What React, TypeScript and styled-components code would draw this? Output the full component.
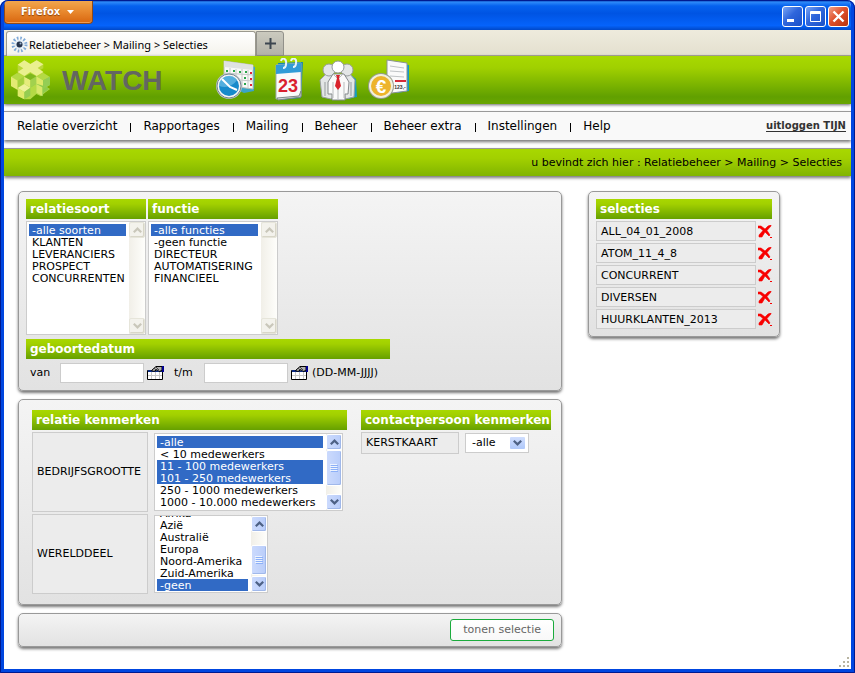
import React, { useLayoutEffect, useRef } from "react";
import styled, { createGlobalStyle, css } from "styled-components";

const lime = "linear-gradient(#a8d800, #a2d000 25%, #66a000)";
const verdana = '"DejaVu Sans", Verdana, sans-serif';

const GlobalStyle = createGlobalStyle`
  *, *::before, *::after { box-sizing: border-box; }
  body { margin: 0; background: #fff; color: #000; font: 11px/12px ${verdana}; }
  button, input, select { font: inherit; margin: 0; color: inherit; }
  button { cursor: pointer; }
  svg { display: block; }
`;

const Window = styled.div`
  display: flex;
  flex-direction: column;
  min-height: 100vh;
  border: solid #0046e0;
  border-width: 0 4px 4px;
  border-radius: 8px 8px 0 0;
  background: #fff;
  outline: 1px solid #001a90;
  outline-offset: -1px;
  overflow: hidden;
`;

const TitleBar = styled.header`
  display: flex;
  justify-content: space-between;
  align-items: flex-start;
  height: 30px;
  margin: 0 -4px;
  padding: 0 6px 0 4px;
  background: linear-gradient(#0a3fae, #2a86f8 8%, #0561ee 20%, #0054e3 45%, #0563fb 85%, #0048c8);
`;

const FirefoxButton = styled.button`
  display: flex;
  align-items: center;
  gap: 7px;
  height: 24px;
  padding: 0 18px 0 16px;
  border: 1px solid #8d4a1c;
  border-top: 0;
  border-radius: 0 0 4px 4px;
  background: linear-gradient(#f2a951, #ea8c31 45%, #d8660f);
  box-shadow: inset 0 -1px 0 #f09b50;
  color: #fff;
  font: bold 11px/14px "DejaVu Sans Condensed", "DejaVu Sans", sans-serif;
  text-shadow: 0 1px 1px #8a4108;
`;

const WindowControls = styled.div`
  display: flex;
  gap: 2px;
  padding-top: 6px;
`;

const ControlButton = styled.button<{ $close?: boolean }>`
  width: 21px;
  height: 21px;
  padding: 0;
  border: 1px solid #fff;
  border-radius: 3px;
  background: ${(p) =>
    p.$close
      ? "linear-gradient(135deg, #f0a088, #e0512c 45%, #b8320c)"
      : "linear-gradient(135deg, #7aa5f5, #2f66dc 45%, #1a50c8)"};
`;

const TabBar = styled.div`
  display: flex;
  align-items: flex-end;
  height: 26px;
  padding-left: 2px;
  border-bottom: 1px solid #aaa798;
  background: linear-gradient(#eeebdd, #e4e0cf);
`;

const Tab = styled.div`
  display: flex;
  align-items: center;
  gap: 1px;
  width: 250px;
  height: 25px;
  margin-bottom: -1px;
  padding: 1px 0 0 4px;
  border: 1px solid #9b998e;
  border-bottom: 0;
  border-radius: 3px 3px 0 0;
  background: linear-gradient(#fff, #f4f2eb);
  font: 11px/14px "Noto Sans", Tahoma, sans-serif;
`;

const NewTab = styled.button`
  display: grid;
  place-items: center;
  width: 28px;
  height: 25px;
  margin-bottom: -1px;
  padding: 0;
  border: 1px solid #92918a;
  border-radius: 0 3px 0 0;
  background: linear-gradient(#cbcabf, #b3b2a8);
`;

const Banner = styled.div`
  display: flex;
  align-items: center;
  height: 48px;
  padding-left: 6px;
  background: linear-gradient(#a8d900, #a0d000 25%, #61a000 85%, #68a500);
  box-shadow: 0 1px 3px #666;
`;

const Brand = styled.h1`
  flex: 0 0 153px;
  margin: 2px 0 0 12px;
  color: #636661;
  font: bold 28px/34px "Liberation Sans", Arial, sans-serif;
`;

const Shortcuts = styled.div`
  display: flex;
  gap: 9px;
`;

const Shortcut = styled.button`
  width: 42px;
  height: 44px;
  padding: 0;
  border: 0;
  background: none;
`;

const NavBar = styled.nav`
  display: flex;
  align-items: center;
  justify-content: space-between;
  height: 29px;
  margin-top: 7px;
  padding: 0 5px 0 13px;
  border-top: 1px solid #999;
  background: #f9f9f9;
  box-shadow: 0 2px 3px #777;
`;

const NavItems = styled.ul`
  display: flex;
  margin: 0;
  padding: 0;
  list-style: none;
  font-size: 12px;
  line-height: 16px;
`;

const NavItem = styled.li`
  display: flex;
  align-items: center;
  & + &::before {
    content: "";
    height: 9px;
    margin: 2px 12px 0 13px;
    border-left: 1px solid #000;
  }
`;

const NavLink = styled.a`
  color: #000;
  text-decoration: none;
`;

const Logout = styled.a`
  color: #333;
  font-size: 10px;
  font-weight: bold;
  text-underline-offset: 2px;
`;

const Crumbs = styled.div`
  height: 28px;
  margin-top: 8px;
  padding: 0 9px;
  border-top: 1px solid #999;
  background: linear-gradient(#a8d800, #a2d000 35%, #80b400);
  box-shadow: 0 2px 3px #777;
  line-height: 28px;
  text-align: right;
`;

const Content = styled.main`
  display: flex;
  flex-wrap: wrap;
  align-items: flex-start;
  gap: 26px;
  padding: 15px 14px 8px;
`;

const MainColumn = styled.form`
  flex: 0 1 544px;
  display: flex;
  flex-direction: column;
  gap: 8px;
`;

const Panel = styled.section<{ $roomy?: boolean }>`
  padding: ${(p) => (p.$roomy ? "10px 8px 10px 13px" : "7px")};
  border: 1px solid #999;
  border-radius: 5px;
  background: linear-gradient(#f4f4f4, #e2e2e2);
  box-shadow: 0 2px 3px #777;
`;

const SidePanel = styled(Panel)`
  flex: 0 0 192px;
`;

const ActionPanel = styled(Panel)`
  display: flex;
  justify-content: flex-end;
  padding: 5px 7px;
`;

const Heading = styled.h2`
  margin: 0;
  height: 20px;
  padding: 0 1px 0 4px;
  background: ${lime};
  color: #fff;
  font: bold 12px/20px ${verdana};
  white-space: nowrap;
`;

const ListPair = styled.div`
  display: grid;
  grid-template-columns: 120px 130px;
  gap: 2px;
`;

const Birthday = styled.div`
  max-width: 364px;
  margin-top: 4px;
`;

const DateRow = styled.div`
  display: flex;
  align-items: center;
  margin-top: 3px;
  padding-left: 4px;
  height: 21px;
`;

const DateLabel = styled.label`
  width: 30px;
`;

const DateInput = styled.input`
  width: 84px;
  height: 20px;
  padding: 2px 4px;
  border: 1px solid #ccc;
  background: #fff;
`;

const DateButton = styled.button`
  margin: 0 4px 0 3px;
  padding: 0;
  border: 0;
  background: none;
  & + label {
    margin-left: 6px;
  }
`;

const ListFrame = styled.div<{ $rows: number; $width: number }>`
  display: flex;
  width: ${(p) => p.$width}px;
  height: ${(p) => p.$rows * 12 + 6}px;
  border: 1px solid #ccc;
  background: #fff;
`;

const List = styled.select<{ $flush: boolean }>`
  flex: 1;
  min-width: 0;
  margin: ${(p) => (p.$flush ? "0 3px 0 2px" : "2px 3px 2px 2px")};
  padding: 0;
  border: 0;
  border-radius: 0;
  outline: 0;
  background: #fff;
  scrollbar-width: none;
  overflow-y: auto;
  option {
    height: 12px;
    min-height: 12px;
    padding: 0 3px;
    line-height: 12px;
  }
  option:checked {
    background: linear-gradient(#316ac5, #316ac5);
    -webkit-text-fill-color: #fff;
  }
`;

const Bar = styled.div`
  display: flex;
  flex-direction: column;
  flex: 0 0 16px;
  background: linear-gradient(90deg, #f1efe8, #fefefb);
`;

const blueFace = css`
  border: 1px solid #fff;
  border-radius: 2px;
  background: linear-gradient(90deg, #cbdafd, #b9cdfa);
  box-shadow: inset -1px -1px 0 #a0b8ea;
`;

const BarButton = styled.button`
  display: grid;
  place-items: center;
  flex: 0 0 16px;
  padding: 0;
  ${blueFace}
  color: #4d6185;
  &:disabled {
    border-color: #e6e5da;
    background: #f3f2ec;
    box-shadow: inset -1px -1px 0 #d8d6c8;
    color: #c9c7ba;
  }
`;

const Thumb = styled.div<{ $size: number; $end: boolean }>`
  display: grid;
  place-items: center;
  height: ${(p) => p.$size}px;
  margin: ${(p) => (p.$end ? "auto 0 1px" : "0 0 auto")};
  ${blueFace}
`;

const Filler = styled.div`
  flex: 1;
`;

const Traits = styled.div`
  display: grid;
  grid-template-columns: minmax(0, 315px) max-content;
  align-items: start;
  gap: 14px;
`;

const TraitRow = styled.div<{ $label: number }>`
  display: grid;
  grid-template-columns: ${(p) => p.$label}px auto;
  justify-content: start;
  align-items: center;
  gap: 6px;
  margin-top: 2px;
`;

const TraitLabel = styled.label<{ $tall?: boolean }>`
  display: flex;
  align-items: center;
  height: ${(p) => (p.$tall ? 80 : 22)}px;
  padding-left: 4px;
  border: 1px solid #ccc;
  background: #ececec;
`;

const Picker = styled.div`
  position: relative;
  width: 64px;
`;

const PickerSelect = styled.select`
  appearance: none;
  width: 100%;
  height: 20px;
  padding: 0 6px;
  border: 1px solid #ccc;
  border-radius: 0;
  background: #fff;
`;

const PickerArrow = styled.span`
  position: absolute;
  top: 4px;
  right: 4px;
  display: grid;
  place-items: center;
  width: 15px;
  height: 12px;
  border-radius: 1px;
  background: linear-gradient(#d0defe, #afc8fa);
  color: #4d6185;
  pointer-events: none;
`;

const Submit = styled.button`
  height: 22px;
  padding: 0 12px;
  border: 1px solid #1aab3c;
  border-radius: 3px;
  background: linear-gradient(#fff, #f8f8f8);
  color: #666;
  line-height: 20px;
`;

const Selections = styled.ul`
  margin: 0;
  padding: 0;
  list-style: none;
`;

const Selection = styled.li`
  display: flex;
  align-items: center;
  gap: 2px;
  margin-top: 2px;
`;

const SelectionName = styled.span`
  flex: 1;
  height: 20px;
  padding-left: 4px;
  border: 1px solid #ccc;
  background: #ececec;
  line-height: 19px;
`;

const DeleteButton = styled.button`
  padding: 0;
  border: 0;
  background: none;
`;

const Grip = styled.div`
  display: flex;
  justify-content: flex-end;
  margin-top: auto;
  padding: 0 1px 1px 0;
`;

function Chevron({ up }: { up?: boolean }) {
  return (
    <svg width="9" height="6" viewBox="0 0 9 6" fill="none" stroke="currentColor" strokeWidth="2.2">
      <path d={up ? "M.8 5.2 4.5 1.6 8.2 5.2" : "M.8.8 4.5 4.4 8.2.8"} />
    </svg>
  );
}

type ListBoxProps = {
  id: string;
  options: string[];
  selected: string[];
  rows: number;
  width: number;
  thumb?: number;
  atEnd?: boolean;
  label?: string;
};

function ListBox({ id, options, selected, rows, width, thumb = 0, atEnd = false, label }: ListBoxProps) {
  const list = useRef<HTMLSelectElement>(null);
  useLayoutEffect(() => {
    if (list.current) list.current.scrollTop = atEnd ? list.current.scrollHeight : 0;
  }, [atEnd]);
  const scroll = (rowsBy: number) => list.current?.scrollBy(0, rowsBy * 12);
  return (
    <ListFrame $rows={rows} $width={width}>
      <List id={id} ref={list} multiple size={rows} defaultValue={selected} aria-label={label} $flush={atEnd}>
        {options.map((o) => (
          <option key={o}>{o}</option>
        ))}
      </List>
      <Bar>
        <BarButton type="button" disabled={!thumb} aria-label="Omhoog" onClick={() => scroll(-1)}>
          <Chevron up />
        </BarButton>
        {thumb ? (
          <Thumb $size={thumb} $end={atEnd}>
            <svg width="8" height="8">
              <path d="M0 .5h7M0 2.5h7M0 4.5h7M0 6.5h7" stroke="#eef4fe" />
              <path d="M1 1.5h7M1 3.5h7M1 5.5h7M1 7.5h7" stroke="#8cb0f8" />
            </svg>
          </Thumb>
        ) : (
          <Filler />
        )}
        <BarButton type="button" disabled={!thumb} aria-label="Omlaag" onClick={() => scroll(1)}>
          <Chevron />
        </BarButton>
      </Bar>
    </ListFrame>
  );
}

function CalendarIcon() {
  return (
    <svg width="17" height="15" viewBox="0 0 17 15">
      <path d="M.5 5.5h15v9H.5z" fill="#fff" stroke="#000" />
      <path d="M1 5h14v2H1z" fill="#0a2a80" />
      <path d="M1 10.5h14M4.5 7v7M8.5 7v7M12.5 7v7" stroke="#c8c8c8" />
      <path d="M4.5 5.5 9 1.5h6v4l-3 1-2-2-3 2z" fill="#b0b0b0" stroke="#000" />
      <path d="m7 3 3 3M9 2l3 3" stroke="#444" />
      <path d="M15 1h2v6h-2z" fill="#000090" />
    </svg>
  );
}

function DeleteIcon() {
  return (
    <svg width="14" height="13" viewBox="0 0 14 13">
      <path d="M0 1h3l4 3 3-3 3-1v1L9 5.500l3 4.500-1 1-4-4-3 5-3 0V10l4-4.500-3-2.500H0z" fill="#f80000" stroke="#f80000" strokeWidth=".6" />
      <path d="M12 12h2v1h-2z" fill="#f80000" />
    </svg>
  );
}

function Favicon() {
  return (
    <svg width="17" height="17" viewBox="0 0 17 17">
      <circle cx="8.5" cy="8.5" r="6.5" fill="none" stroke="#80aad8" strokeWidth="3" strokeDasharray="1.6 1.8" />
      <circle cx="8.5" cy="8.5" r="4.5" fill="#dce9f5" />
      <circle cx="8.5" cy="8.5" r="3" fill="#25334b" />
      <circle cx="9.5" cy="7.5" r="1" fill="#9eb5cf" />
    </svg>
  );
}

function Logo() {
  return (
    <svg width="40" height="40" viewBox="12 12 120 120">
      <path d="m35 26 20-13 18 11 19-11 20 12v12l-8 4 8 7v18H35z" fill="#b9d838" />
      <path d="m15 62 18-11 22 12 18-10 18 10 22-12 19 12v24l-10 6 10 6-19 14-8 8-14-7-18 16-18 0-19-10V100L15 90z" fill="#b4da45" />
      <path d="m35 26 20-13 18 11 19-11 20 12-17 11 17 12-20 12-19-12-18 12-20-12 17-11z" fill="#eaf08f" />
      <path d="m15 62 20 12 0 28-20-12z" fill="#e3ea72" />
      <path d="m35 74 18-12v20l-18 18z" fill="#a5d03c" />
      <path d="m55 62 18 10v22l-18-10z" fill="#e6ec7c" />
      <path d="m73 72 18-11v22l-18 11z" fill="#a2d14e" />
      <path d="m55 62 18-10 18 9-18 11z" fill="#7fb81e" />
      <path d="m35 96 20-12 18 11-18 13z" fill="#eef29a" />
      <path d="m35 96 20 12v22l-20-10z" fill="#dfe96c" />
      <path d="m55 108 18-13v24l-18 11z" fill="#94cc52" />
      <path d="m91 61 21 12 20-11v24l-12 6 10 7-18 13-2 9-19-11V84l-18 11V94l18-11z" fill="#8fcb4c" />
      <path d="m91 61 20 12v16l-20-6z" fill="#dde968" />
      <path d="m91 84 18 10v26l-18-10z" fill="#d8e76a" />
      <path d="m112 73 20-11v24l-20 12z" fill="#93cd55" />
    </svg>
  );
}

function ScheduleIcon() {
  return (
    <svg width="42" height="44" viewBox="0 0 42 44">
      <path d="m12 5 28 4-1 24-10 2-17-8z" fill="#3aa4c8" />
      <path d="m9 3 29 4v24l-29-4z" fill="#f8f9f8" stroke="#b8bcb8" />
      <path d="m9 3 29 4v5L9 9z" fill="#dfe2e1" />
      <path d="m9 15 29 2M9 21l29 2M15 10v17M21 11v17M27 11v18M33 12v18" stroke="#c6c9c8" />
      <path d="M11 12h2v2h-2zm7 0h2v2h-2zm6 1h2v2h-2zm6 0h2v2h-2zm-1 6h2v2h-2zm0 6h2v2h-2z" fill="#2aa54b" />
      <path d="M35 14h2v2h-2zm0 6h2v2h-2zm0 6h2v2h-2z" fill="#df2437" />
      <circle cx="14" cy="28" r="13" fill="#b9c4cb" />
      <circle cx="14" cy="28" r="12" fill="#f5f6f7" stroke="#7b8790" />
      <circle cx="14" cy="28" r="10" fill="#178acb" />
      <path d="M4 28a10 10 0 0 1 18-6c-5 7-11 8-18 6" fill="#6cbde6" opacity=".7" />
      <path d="m7 21 8 8 7 3" fill="none" stroke="#fff" strokeWidth="2" />
    </svg>
  );
}

function DateIcon() {
  return (
    <svg width="42" height="44" viewBox="-2 0 42 44">
      <path d="m10 5 25-1-2 36-21 2z" fill="#1688ae" />
      <path d="m8 7 25-2v33L8 41z" fill="#fafafa" stroke="#a2aaad" />
      <path d="m8 7 25-2v9L8 16z" fill="#319bd7" />
      <path d="m9 40 22-2 2-5v6L10 42z" fill="#d6dadb" stroke="#808a8b" />
      <path d="M13 3c1-4 6-3 5 3 0 2-1 4-3 4M23 3c1-4 6-3 5 2 0 2-1 4-3 4" fill="none" stroke="#e7f3fa" strokeWidth="2" />
      <text x="20" y="34" textAnchor="middle" fill="#d9202e" fontFamily="Liberation Sans" fontWeight="bold" fontSize="18">23</text>
    </svg>
  );
}

function PeopleIcon() {
  return (
    <svg width="42" height="44" viewBox="0 0 42 44">
      <path d="m34 17 5 4 1 18-9 2z" fill="#179cc1" />
      <g fill="#e3e6e6" stroke="#989d9f">
        <path d="m3 22 6-6h8v23l-3 2-9-2zM26 16h7l5 6-1 17-9 2z" />
        <circle cx="12" cy="12" r="6" />
        <circle cx="30" cy="12" r="6" />
        <path d="M8 24v14M34 24v14" />
      </g>
      <path d="m11 24 5-8h11l5 8-1 12h-3v6H15v-6h-4z" fill="#fafafa" stroke="#858a8d" />
      <path d="M16 24v16M27 24v16" stroke="#b8bbbc" />
      <circle cx="21" cy="9" r="6" fill="#fff" stroke="#92989b" />
      <path d="m16 16 5 5 5-5M21 21v20" fill="none" stroke="#b8bbbc" />
      <path d="m19 17 4 0-1 3 2 8-3 4-3-4 2-8z" fill="#d9232c" />
    </svg>
  );
}

function InvoiceIcon() {
  return (
    <svg width="42" height="44" viewBox="0 0 42 44">
      <path d="m21 4 20 3v26l-12 2z" fill="#139ac4" />
      <path d="m19 2 20 3v28l-15 2-5-4z" fill="#fafafa" stroke="#8b9395" />
      <path d="m22 8 14 2M22 13l14 1M22 18l14 1" stroke="#bfc3c5" />
      <path d="M27 23h11" stroke="#d62a36" strokeWidth="2" />
      <text x="32" y="31" textAnchor="middle" fill="#333" fontFamily="Liberation Sans" fontWeight="bold" fontSize="5">123,-</text>
      <circle cx="13" cy="28" r="13" fill="#969c91" />
      <circle cx="13" cy="28" r="12" fill="#f2f0dc" />
      <circle cx="13" cy="28" r="10" fill="#edb42b" />
      <text x="13" y="35" textAnchor="middle" fill="#fff" fontFamily="Liberation Sans" fontWeight="bold" fontSize="19">€</text>
    </svg>
  );
}

const navItems = ["Relatie overzicht", "Rapportages", "Mailing", "Beheer", "Beheer extra", "Instellingen", "Help"];
const selections = ["ALL_04_01_2008", "ATOM_11_4_8", "CONCURRENT", "DIVERSEN", "HUURKLANTEN_2013"];

const shortcuts = [
  { name: "Planning", icon: <ScheduleIcon /> },
  { name: "Agenda", icon: <DateIcon /> },
  { name: "Relaties", icon: <PeopleIcon /> },
  { name: "Facturen", icon: <InvoiceIcon /> },
];

export default function App() {
  return (
    <>
      <GlobalStyle />
      <Window>
        <TitleBar>
          <FirefoxButton type="button">
            Firefox
            <svg width="7" height="4" fill="#fff">
              <path d="M0 0h7L3.5 4z" />
            </svg>
          </FirefoxButton>
          <WindowControls>
            <ControlButton type="button" aria-label="Minimaliseren">
              <svg width="19" height="19">
                <path d="M4 12h7v3H4z" fill="#fff" />
              </svg>
            </ControlButton>
            <ControlButton type="button" aria-label="Maximaliseren">
              <svg width="19" height="19" fill="none" stroke="#fff">
                <path d="M4.5 4.5h10v10h-10zM4 5.5h11M4 6.5h11" />
              </svg>
            </ControlButton>
            <ControlButton type="button" aria-label="Sluiten" $close>
              <svg width="19" height="19" stroke="#fff" strokeWidth="2.4">
                <path d="m4.5 4.5 10 10M14.5 4.5l-10 10" />
              </svg>
            </ControlButton>
          </WindowControls>
        </TitleBar>
        <TabBar>
          <Tab>
            <Favicon />
            Relatiebeheer &gt; Mailing &gt; Selecties
          </Tab>
          <NewTab type="button" aria-label="Nieuw tabblad">
            <svg width="11" height="11" stroke="#3c4650" strokeWidth="2">
              <path d="M0 5.5h11M5.5 0v11" />
            </svg>
          </NewTab>
        </TabBar>
        <Banner>
          <Logo />
          <Brand>WATCH</Brand>
          <Shortcuts>
            {shortcuts.map((s) => (
              <Shortcut key={s.name} type="button" aria-label={s.name}>
                {s.icon}
              </Shortcut>
            ))}
          </Shortcuts>
        </Banner>
        <NavBar>
          <NavItems>
            {navItems.map((n) => (
              <NavItem key={n}>
                <NavLink href="#">{n}</NavLink>
              </NavItem>
            ))}
          </NavItems>
          <Logout href="#">uitloggen TIJN</Logout>
        </NavBar>
        <Crumbs>u bevindt zich hier : Relatiebeheer &gt; Mailing &gt; Selecties</Crumbs>
        <Content>
          <MainColumn onSubmit={(e) => e.preventDefault()}>
            <Panel>
              <ListPair>
                <Heading>relatiesoort</Heading>
                <Heading>functie</Heading>
                <ListBox
                  id="relatiesoort"
                  label="relatiesoort"
                  rows={9}
                  width={120}
                  options={["-alle soorten", "KLANTEN", "LEVERANCIERS", "PROSPECT", "CONCURRENTEN"]}
                  selected={["-alle soorten"]}
                />
                <ListBox
                  id="functie"
                  label="functie"
                  rows={9}
                  width={130}
                  options={["-alle functies", "-geen functie", "DIRECTEUR", "AUTOMATISERING", "FINANCIEEL"]}
                  selected={["-alle functies"]}
                />
              </ListPair>
              <Birthday>
                <Heading>geboortedatum</Heading>
                <DateRow>
                  <DateLabel htmlFor="van">van</DateLabel>
                  <DateInput id="van" type="text" />
                  <DateButton type="button" aria-label="Kies begindatum">
                    <CalendarIcon />
                  </DateButton>
                  <DateLabel htmlFor="tm">t/m</DateLabel>
                  <DateInput id="tm" type="text" />
                  <DateButton type="button" aria-label="Kies einddatum">
                    <CalendarIcon />
                  </DateButton>
                  <span>(DD-MM-JJJJ)</span>
                </DateRow>
              </Birthday>
            </Panel>
            <Panel $roomy>
              <Traits>
                <div>
                  <Heading>relatie kenmerken</Heading>
                  <TraitRow $label={116}>
                    <TraitLabel $tall htmlFor="grootte">BEDRIJFSGROOTTE</TraitLabel>
                    <ListBox
                      id="grootte"
                      rows={6}
                      width={189}
                      thumb={36}
                      options={[
                        "-alle",
                        "< 10 medewerkers",
                        "11 - 100 medewerkers",
                        "101 - 250 medewerkers",
                        "250 - 1000 medewerkers",
                        "1000 - 10.000 medewerkers",
                        "> 10.000 medewerkers",
                        "-geen",
                      ]}
                      selected={["-alle", "11 - 100 medewerkers", "101 - 250 medewerkers"]}
                    />
                  </TraitRow>
                  <TraitRow $label={116}>
                    <TraitLabel $tall htmlFor="werelddeel">WERELDDEEL</TraitLabel>
                    <ListBox
                      id="werelddeel"
                      rows={6}
                      width={114}
                      thumb={30}
                      atEnd
                      options={["-alle", "Antarctica", "Afrika", "Azië", "Australië", "Europa", "Noord-Amerika", "Zuid-Amerika", "-geen"]}
                      selected={["-geen"]}
                    />
                  </TraitRow>
                </div>
                <div>
                  <Heading>contactpersoon kenmerken</Heading>
                  <TraitRow $label={98}>
                    <TraitLabel htmlFor="kerstkaart">KERSTKAART</TraitLabel>
                    <Picker>
                      <PickerSelect id="kerstkaart">
                        <option>-alle</option>
                      </PickerSelect>
                      <PickerArrow>
                        <Chevron />
                      </PickerArrow>
                    </Picker>
                  </TraitRow>
                </div>
              </Traits>
            </Panel>
            <ActionPanel>
              <Submit type="submit">tonen selectie</Submit>
            </ActionPanel>
          </MainColumn>
          <SidePanel>
            <Heading>selecties</Heading>
            <Selections>
              {selections.map((s) => (
                <Selection key={s}>
                  <SelectionName>{s}</SelectionName>
                  <DeleteButton type="button" aria-label={`Verwijder ${s}`}>
                    <DeleteIcon />
                  </DeleteButton>
                </Selection>
              ))}
            </Selections>
          </SidePanel>
        </Content>
        <Grip>
          <svg width="11" height="11" fill="#b8b4a2">
            <path d="M8 0h2v2H8zM4 4h2v2H4zM8 4h2v2H8zM0 8h2v2H0zM4 8h2v2H4zM8 8h2v2H8z" />
          </svg>
        </Grip>
      </Window>
    </>
  );
}
